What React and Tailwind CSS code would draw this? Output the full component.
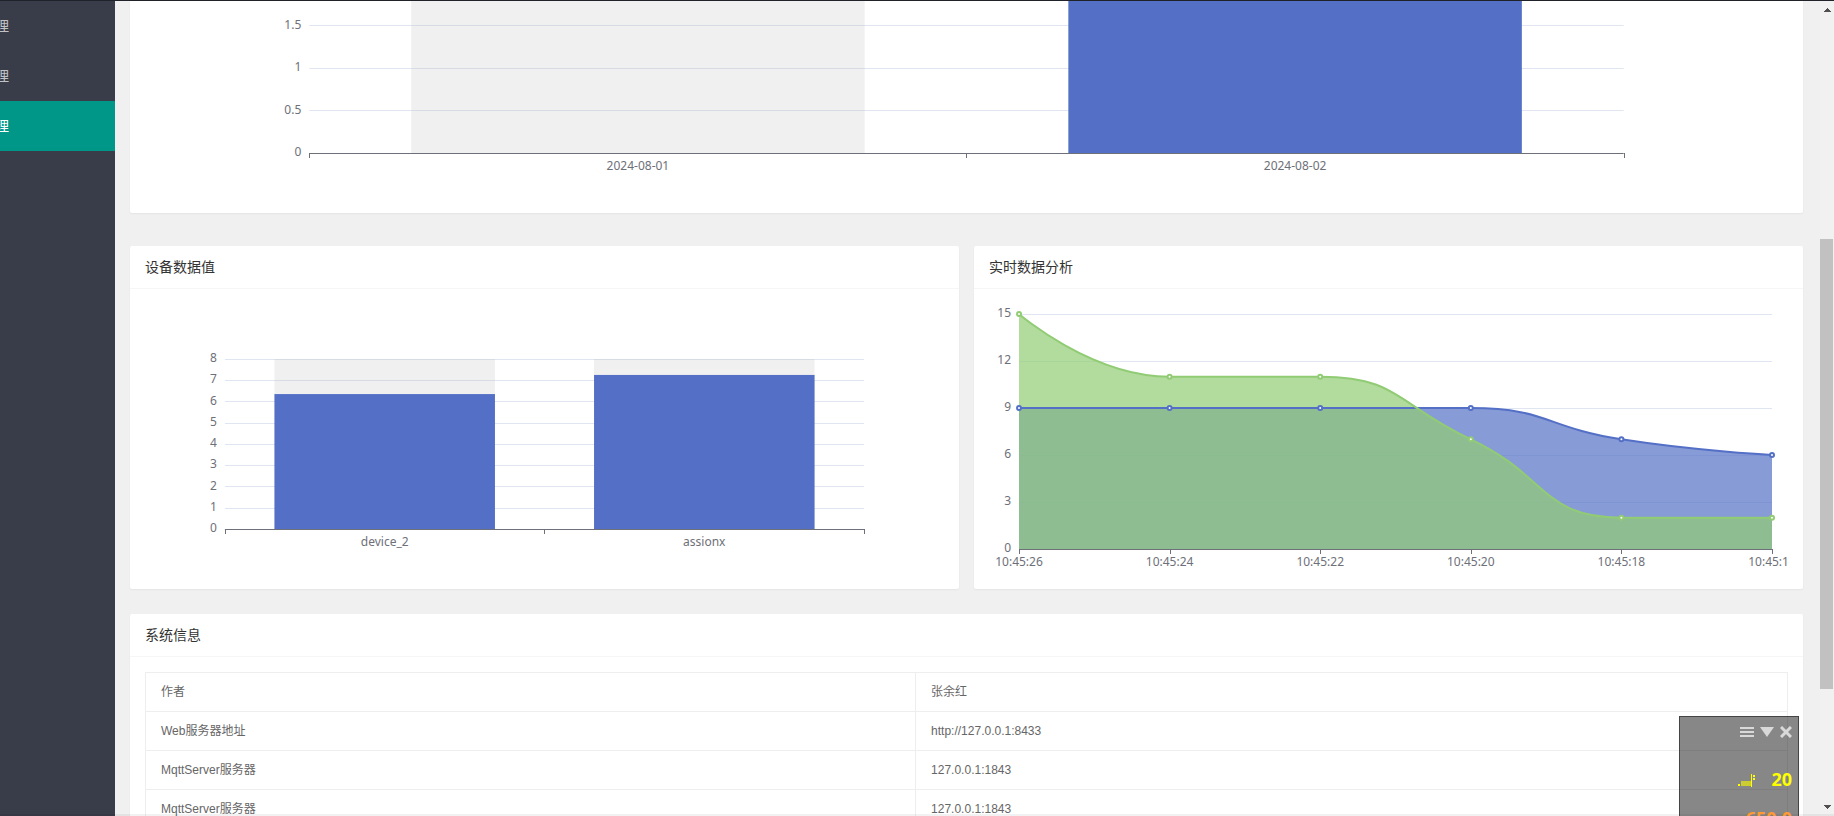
import { useLayoutEffect, useRef, useState } from "react";
import clsx from "clsx";

const BLUE = "#5470c6";
const GREEN = "#91cc75";

const menuItems = [
  { id: "m1", label: "理", active: false },
  { id: "m2", label: "理", active: false },
  { id: "m3", label: "理", active: true },
];

const systemInfo = [
  ["作者", "张余红"],
  ["Web服务器地址", "http://127.0.0.1:8433"],
  ["MqttServer服务器", "127.0.0.1:1843"],
  ["MqttServer服务器", "127.0.0.1:1843"],
];

const times = ["10:45:26", "10:45:24", "10:45:22", "10:45:20", "10:45:18", "10:45:16"];

const realtimeSeries = [
  { name: "a", color: BLUE, data: [9, 9, 9, 9, 7, 6] },
  { name: "b", color: GREEN, data: [15, 11, 11, 7, 2, 2] },
];

// keeps a chart as wide as the box it sits in
const useWidth = () => {
  const ref = useRef(null);
  const [width, setWidth] = useState(0);

  useLayoutEffect(() => {
    const el = ref.current;
    const update = () => setWidth(el.clientWidth);
    update();
    const observer = new ResizeObserver(update);
    observer.observe(el);
    return () => observer.disconnect();
  }, []);

  return [ref, width];
};

// centre of the nearest pixel, so that 1px lines stay sharp
const crisp = (n) => Math.ceil(n - 0.5) + 0.5;
const clamp = (n, a, b) => Math.max(Math.min(n, Math.max(a, b)), Math.min(a, b));

// smooth curve that never overshoots its neighbours
const smoothPath = (pts, smooth = 0.5) => {
  let d = `M${pts[0][0]},${pts[0][1]}`;
  let c0 = pts[0];

  for (let i = 1; i < pts.length; i++) {
    const [px, py] = pts[i - 1];
    const [x, y] = pts[i];
    let c1 = [x, y];
    let next0 = [x, y];

    if (i < pts.length - 1) {
      const [nx, ny] = pts[i + 1];
      const prevLen = Math.hypot(x - px, y - py);
      const nextLen = Math.hypot(nx - x, ny - y);
      const ratio = nextLen / (nextLen + prevLen);

      next0 = [
        clamp(x + (nx - px) * smooth * ratio, nx, x),
        clamp(y + (ny - py) * smooth * ratio, ny, y),
      ];
      c1 = [
        clamp(x - ((next0[0] - x) * prevLen) / nextLen, px, x),
        clamp(y - ((next0[1] - y) * prevLen) / nextLen, py, y),
      ];
      next0 = [
        x + ((x - c1[0]) * nextLen) / prevLen,
        y + ((y - c1[1]) * nextLen) / prevLen,
      ];
    }

    d += ` C${c0[0]},${c0[1]} ${c1[0]},${c1[1]} ${x},${y}`;
    c0 = next0;
  }
  return d;
};

const YAxis = ({ ticks, left, right, toY }) => (
  <g>
    {ticks.map((t) => (
      <g key={t}>
        {t !== 0 && (
          <line x1={left} x2={right} y1={crisp(toY(t))} y2={crisp(toY(t))} stroke="#e0e6f1" />
        )}
        <text x={left - 8} y={Math.round(toY(t)) + 3} textAnchor="end" fill="#6e7079">
          {t}
        </text>
      </g>
    ))}
  </g>
);

const XAxis = ({ left, right, y, marks, labels }) => (
  <g>
    <line x1={left} x2={right} y1={crisp(y)} y2={crisp(y)} stroke="#6e7079" />
    {marks.map((x, i) => (
      <line key={i} x1={crisp(x)} x2={crisp(x)} y1={y} y2={y + 5} stroke="#6e7079" />
    ))}
    {labels.map(({ x, text }) => (
      <text key={text} x={x} y={y + 17} textAnchor="middle" fill="#6e7079">
        {text}
      </text>
    ))}
  </g>
);

const BarChart = ({ height, top, bottom = 60, unit, ticks, max, bars, label }) => {
  const [ref, width] = useWidth();
  const left = width * 0.1;
  const right = width * 0.9;
  const baseY = height - bottom;
  const toY = (v) => baseY - v * unit;
  const band = (right - left) / bars.length;
  const barWidth = band * 0.69;

  return (
    <div ref={ref} className="w-full">
      <svg
        width={width}
        height={height}
        role="img"
        aria-label={label}
        className="block font-['Noto_Sans',sans-serif] text-xs"
      >
        <YAxis ticks={ticks} left={left} right={right} toY={toY} />
        {bars.map((bar, i) => {
          const x = left + band * i + (band - barWidth) / 2;
          return (
            <g key={bar.name}>
              <rect x={x} y={top} width={barWidth} height={baseY - top} fill="rgba(180,180,180,0.2)" />
              <rect x={x} y={toY(Math.min(bar.value, max))} width={barWidth} height={Math.min(bar.value, max) * unit} fill={BLUE} />
            </g>
          );
        })}
        <XAxis
          left={left}
          right={right}
          y={baseY}
          marks={[...bars.map((_, i) => left + band * i), right]}
          labels={bars.map((bar, i) => ({ x: left + band * (i + 0.5), text: bar.name }))}
        />
      </svg>
    </div>
  );
};

const AreaChart = ({ height, label }) => {
  const [ref, width] = useWidth();
  const left = 30;
  const right = Math.max(width - 16, left);
  const baseY = height - 40;
  const toY = (v) => baseY - (v * (baseY - 15)) / 15;
  const xs = times.map((_, i) => left + ((right - left) * i) / (times.length - 1));
  const series = realtimeSeries.map((s) => {
    const pts = s.data.map((v, i) => [xs[i], toY(v)]);
    return { ...s, pts, path: width ? smoothPath(pts) : "M0,0" };
  });

  return (
    <div ref={ref} className="w-full">
      <svg
        width={width}
        height={height}
        role="img"
        aria-label={label}
        className="block overflow-hidden font-['Noto_Sans',sans-serif] text-xs"
      >
        <YAxis ticks={[0, 3, 6, 9, 12, 15]} left={left} right={right} toY={toY} />
        <XAxis
          left={left}
          right={right}
          y={baseY}
          marks={xs}
          labels={times.map((text, i) => ({ x: xs[i], text }))}
        />
        {series.map((s) => (
          <path key={s.name} d={`${s.path} L${right},${baseY} L${left},${baseY} Z`} fill={s.color} fillOpacity="0.7" />
        ))}
        {series.map((s) => (
          <path key={s.name} d={s.path} fill="none" stroke={s.color} strokeWidth="2" />
        ))}
        {series.map((s) =>
          s.pts.map(([x, y], i) => (
            <circle key={s.name + i} cx={x} cy={y} r="2" fill="#fff" stroke={s.color} strokeWidth="2" />
          ))
        )}
      </svg>
    </div>
  );
};

const Card = ({ title, children }) => (
  <section className="min-w-0 flex-1 rounded-xs bg-white shadow-[0_1px_2px_0_rgba(0,0,0,0.05)]">
    <h2 className="h-[43px] border-b border-[#f6f6f6] px-[15px] text-sm leading-[42px] text-[#333]">
      {title}
    </h2>
    {children}
  </section>
);

const Sidebar = () => (
  <aside className="w-[115px] shrink-0 overflow-hidden bg-[#393d49]">
    <nav>
      {menuItems.map((item) => (
        <a
          key={item.id}
          href="#"
          className={clsx(
            "flex h-[50px] items-center text-sm",
            item.active ? "bg-[#009688] text-white" : "text-white/70"
          )}
        >
          <span className="-ml-[5px]">{item.label}</span>
        </a>
      ))}
    </nav>
  </aside>
);

const ScrollBar = () => (
  <div className="flex w-[14px] shrink-0 flex-col bg-[#f1f1f1]">
    <button aria-label="scroll up" className="flex h-[18px] items-center justify-center">
      <svg width="7" height="4" viewBox="0 0 7 4" fill="#505050">
        <path d="M3 0h1v1h1v1h1v1h1v1H0V3h1V2h1V1h1z" />
      </svg>
    </button>
    <div className="flex flex-1 flex-col">
      <div className="grow-[220]" />
      <div className="w-[13px] grow-[450] bg-[#c1c1c1]" />
      <div className="grow-[109]" />
    </div>
    <button aria-label="scroll down" className="flex h-[18px] items-center justify-center">
      <svg width="7" height="4" viewBox="0 0 7 4" fill="#505050">
        <path d="M0 0h7v1H6v1H5v1H4v1H3V3H2V2H1V1H0z" />
      </svg>
    </button>
  </div>
);

// small always-on-top monitor in the corner
const Monitor = () => (
  <div className="absolute right-[35px] bottom-0 h-[100px] w-[120px] overflow-hidden border border-b-0 border-[#444] bg-black/47 pr-[6px]">
    <div className="flex h-[30px] items-center justify-end gap-[6px] text-[#d9d9d9]">
      <button aria-label="menu">
        <svg width="14" height="10" fill="currentColor">
          <path d="M0 0h14v2H0zM0 4h14v2H0zM0 8h14v2H0z" />
        </svg>
      </button>
      <button aria-label="collapse">
        <svg width="14" height="10" fill="currentColor">
          <path d="M0 0h14L7 10z" />
        </svg>
      </button>
      <button aria-label="close">
        <svg width="12" height="12" fill="none" stroke="currentColor" strokeWidth="3">
          <path d="M1 1l10 10M11 1L1 11" />
        </svg>
      </button>
    </div>
    <div className="mt-[13px] font-['Noto_Sans',sans-serif] text-lg leading-[39px] font-bold">
      <div className="flex items-center justify-end gap-4 text-[#ffff00]">
        <svg width="17" height="14" viewBox="0 0 17 14" fill="currentColor">
          <path d="M0 11h2v2H0zM13 1h1v13h-1zM15 2h2v2h-2zM15 5h2v2h-2z" />
          <path d="M3 8h10v5H3z" fill="#cccc33" />
        </svg>
        <span>20</span>
      </div>
      <div className="text-right text-[#ff9933]">650.0</div>
    </div>
  </div>
);

const App = () => {
  return (
    <div className="relative flex h-screen flex-col overflow-hidden bg-[#f0f0f0] font-['Liberation_Sans','Noto_Sans_CJK_SC',sans-serif]">
      <div className="h-px shrink-0 bg-[#20222a]" />

      <div className="flex min-h-0 flex-1">
        <Sidebar />

        <main className="min-w-0 flex-1 overflow-hidden pr-[17px] pl-[15px]">
          {/* daily totals */}
          <section className="rounded-b-xs bg-white px-[15px] shadow-[0_1px_2px_0_rgba(0,0,0,0.05)]">
            <BarChart
              label="2024-08"
              height={212}
              top={0}
              unit={85}
              max={152 / 85}
              ticks={[0, 0.5, 1, 1.5]}
              bars={[
                { name: "2024-08-01", value: 0 },
                { name: "2024-08-02", value: 2 },
              ]}
            />
          </section>

          <div className="mt-[33px] flex gap-[15px]">
            <Card title="设备数据值">
              <div className="px-[15px] pt-[10px]">
                <BarChart
                  label="设备数据值"
                  height={290}
                  top={60}
                  unit={170 / 8}
                  max={8}
                  ticks={[0, 1, 2, 3, 4, 5, 6, 7, 8]}
                  bars={[
                    { name: "device_2", value: 6.35 },
                    { name: "assionx", value: 7.25 },
                  ]}
                />
              </div>
            </Card>
            <Card title="实时数据分析">
              <div className="px-[15px] pt-[10px]">
                <AreaChart label="实时数据分析" height={290} />
              </div>
            </Card>
          </div>

          <div className="mt-[25px] flex">
            <Card title="系统信息">
              <div className="p-[15px]">
                <table className="w-full border-collapse text-xs text-[#666]">
                  <tbody>
                    {systemInfo.map(([name, value], i) => (
                      <tr key={i} className="h-[39px]">
                        <td className="w-[46.9%] border border-[#eee] px-[15px]">{name}</td>
                        <td className="border border-[#eee] px-[15px]">{value}</td>
                      </tr>
                    ))}
                  </tbody>
                </table>
              </div>
            </Card>
          </div>
        </main>

        <ScrollBar />
      </div>

      <div className="absolute inset-x-0 bottom-0 h-0.5 bg-black/5" />
      <Monitor />
    </div>
  );
};

export default App;
